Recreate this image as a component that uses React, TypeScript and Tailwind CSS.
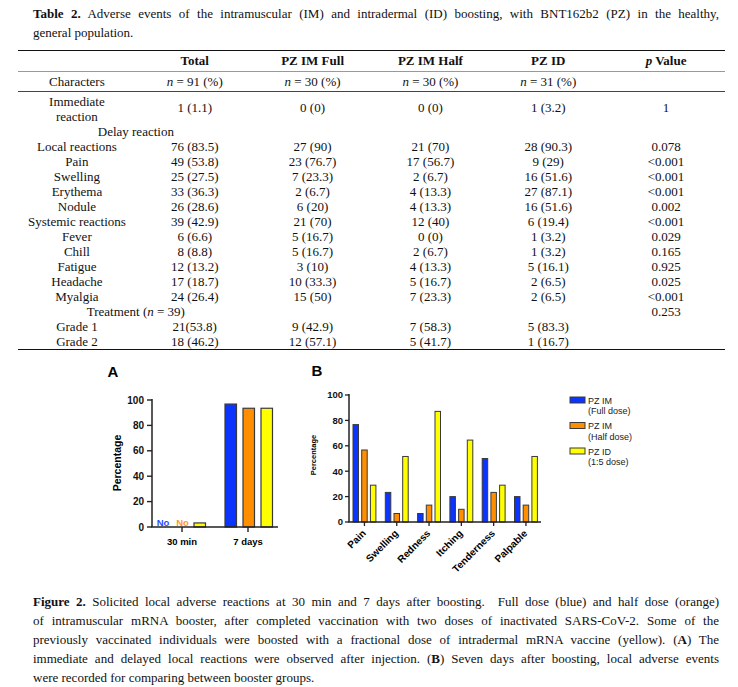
const BLUE = "#0b35ff";
const ORANGE = "#ff8f00";
const YELLOW = "#ffff00";
const EDGE = "#3a3a3a";

type Row = { label: string; cells: string[]; p: string };

const ROWS: Row[] = [
  { label: "Local reactions", cells: ["76 (83.5)", "27 (90)", "21 (70)", "28 (90.3)"], p: "0.078" },
  { label: "Pain", cells: ["49 (53.8)", "23 (76.7)", "17 (56.7)", "9 (29)"], p: "<0.001" },
  { label: "Swelling", cells: ["25 (27.5)", "7 (23.3)", "2 (6.7)", "16 (51.6)"], p: "<0.001" },
  { label: "Erythema", cells: ["33 (36.3)", "2 (6.7)", "4 (13.3)", "27 (87.1)"], p: "<0.001" },
  { label: "Nodule", cells: ["26 (28.6)", "6 (20)", "4 (13.3)", "16 (51.6)"], p: "0.002" },
  { label: "Systemic reactions", cells: ["39 (42.9)", "21 (70)", "12 (40)", "6 (19.4)"], p: "<0.001" },
  { label: "Fever", cells: ["6 (6.6)", "5 (16.7)", "0 (0)", "1 (3.2)"], p: "0.029" },
  { label: "Chill", cells: ["8 (8.8)", "5 (16.7)", "2 (6.7)", "1 (3.2)"], p: "0.165" },
  { label: "Fatigue", cells: ["12 (13.2)", "3 (10)", "4 (13.3)", "5 (16.1)"], p: "0.925" },
  { label: "Headache", cells: ["17 (18.7)", "10 (33.3)", "5 (16.7)", "2 (6.5)"], p: "0.025" },
  { label: "Myalgia", cells: ["24 (26.4)", "15 (50)", "7 (23.3)", "2 (6.5)"], p: "<0.001" },
];

const GRADES: Row[] = [
  { label: "Grade 1", cells: ["21(53.8)", "9 (42.9)", "7 (58.3)", "5 (83.3)"], p: "" },
  { label: "Grade 2", cells: ["18 (46.2)", "12 (57.1)", "5 (41.7)", "1 (16.7)"], p: "" },
];

function DataRow({ row }: { row: Row }) {
  return (
    <div className="grid h-[15px] grid-cols-6 items-center text-center">
      <span>{row.label}</span>
      {row.cells.map((c, i) => (
        <span key={i}>{c}</span>
      ))}
      <span>{row.p}</span>
    </div>
  );
}

const Y_TICKS = [0, 20, 40, 60, 80, 100];

function ChartA() {
  const base = 529;
  const k = 1.27;
  const bars = [
    { x: 194, v: 3.2, c: YELLOW },
    { x: 225, v: 96.8, c: BLUE },
    { x: 243, v: 93.5, c: ORANGE },
    { x: 261, v: 93.5, c: YELLOW },
  ];
  return (
    <svg width={220} height={242} viewBox="90 352 220 242" className="ml-[90px] shrink-0">
      <g fontFamily="'Liberation Sans', Arial, sans-serif" fontWeight="bold">
        <text x={113} y={379} fontSize={15} textAnchor="middle">A</text>
        <text x={0} y={0} fontSize={10.5} textAnchor="middle" transform="translate(121 465) rotate(-90)">
          Percentage
        </text>
        {Y_TICKS.map((t) => (
          <g key={t}>
            <line x1={147} x2={152} y1={base - t * k} y2={base - t * k} stroke="#222" strokeWidth={1.4} />
            <text x={144} y={base - t * k + 3.5} fontSize={10} textAnchor="end" fill="#111">
              {t}
            </text>
          </g>
        ))}
        {bars.map((b, i) => (
          <rect key={i} x={b.x} y={base - b.v * k} width={11.5} height={b.v * k} fill={b.c} stroke={EDGE} strokeWidth={1.2} />
        ))}
        <text x={163} y={528} fontSize={9.5} textAnchor="middle" fill="#2a4dff">No</text>
        <text x={182.5} y={528} fontSize={9.5} textAnchor="middle" fill="#ff9a1a">No</text>
        <line x1={152} x2={152} y1={401} y2={base} stroke="#222" strokeWidth={1.5} />
        <line x1={151.3} x2={278} y1={base} y2={base} stroke="#222" strokeWidth={1.5} />
        <line x1={182} x2={182} y1={base} y2={534} stroke="#222" strokeWidth={1.4} />
        <line x1={248} x2={248} y1={base} y2={534} stroke="#222" strokeWidth={1.4} />
        <text x={182} y={547} fontSize={9.5} textAnchor="middle">30 min</text>
        <text x={248} y={547} fontSize={9.5} textAnchor="middle">7 days</text>
      </g>
    </svg>
  );
}

const GROUPS = [
  { name: "Pain", v: [76.7, 56.7, 29] },
  { name: "Swelling", v: [23.3, 6.7, 51.6] },
  { name: "Redness", v: [6.7, 13.3, 87.1] },
  { name: "Itching", v: [20, 10, 64.5] },
  { name: "Tenderness", v: [50, 23.3, 29] },
  { name: "Palpable", v: [20, 13.3, 51.6] },
];

const LEGEND = [
  { c: BLUE, a: "PZ IM", b: "(Full dose)", y: 399 },
  { c: ORANGE, a: "PZ IM", b: "(Half dose)", y: 424.5 },
  { c: YELLOW, a: "PZ ID", b: "(1:5 dose)", y: 450 },
];

function ChartB() {
  const base = 524;
  const k = 1.27;
  const colors = [BLUE, ORANGE, YELLOW];
  return (
    <svg width={400} height={242} viewBox="310 352 400 242" className="shrink-0">
      <g fontFamily="'Liberation Sans', Arial, sans-serif">
        <text x={317} y={378} fontSize={15} fontWeight="bold" textAnchor="middle">B</text>
        <text x={0} y={0} fontSize={7.5} fontWeight="bold" textAnchor="middle" transform="translate(316 457) rotate(-90)">
          Percentage
        </text>
        {Y_TICKS.map((t) => (
          <g key={t}>
            <line x1={345} x2={349} y1={base - t * k} y2={base - t * k} stroke="#222" strokeWidth={1.3} />
            <text x={343} y={base - t * k + 3.4} fontSize={9.5} fontWeight="bold" textAnchor="end" fill="#111">
              {t}
            </text>
          </g>
        ))}
        {GROUPS.map((g, i) => {
          const x0 = 353 + i * 32.3;
          const cx = x0 + 11.45;
          return (
            <g key={g.name}>
              {g.v.map((v, j) => (
                <rect key={j} x={x0 + j * 8.7} y={base - v * k} width={5.5} height={v * k} fill={colors[j]} stroke={EDGE} strokeWidth={1} />
              ))}
              <line x1={cx} x2={cx} y1={base} y2={528} stroke="#222" strokeWidth={1.3} />
              <text x={0} y={0} fontSize={10} fontWeight="bold" textAnchor="end" transform={`translate(${cx + 2} 536) rotate(-45)`}>
                {g.name}
              </text>
            </g>
          );
        })}
        <line x1={349} x2={349} y1={396} y2={base} stroke="#222" strokeWidth={1.5} />
        <line x1={348.3} x2={541} y1={base} y2={base} stroke="#222" strokeWidth={1.5} />
        {LEGEND.map((l) => (
          <g key={l.b}>
            <rect x={570} y={l.y} width={15} height={6} fill={l.c} stroke={EDGE} strokeWidth={1} />
            <text x={588} y={l.y + 6.5} fontSize={9} fill="#222">{l.a}</text>
            <text x={588} y={l.y + 17} fontSize={9} fill="#222">{l.b}</text>
          </g>
        ))}
      </g>
    </svg>
  );
}

const JUSTIFY = "block whitespace-nowrap [text-align-last:justify] text-justify";

export default function App() {
  return (
    <div className="h-[687px] w-[738px] overflow-hidden bg-white font-['Liberation_Serif',serif] text-[13px] text-[#111]">
      <div className="ml-[33px] w-[686px] pt-[4px] leading-[19px]">
        <span className={JUSTIFY}>
          <b>Table 2.</b> Adverse events of the intramuscular (IM) and intradermal (ID) boosting, with BNT162b2 (PZ) in the healthy,
        </span>
        <span className="block">general population.</span>
      </div>

      <div className="ml-[18px] mt-[8px] w-[707px] border-t-[1.5px] border-[#111] leading-[15px]">
        <div className="grid h-[20.5px] grid-cols-6 items-center border-b-[1.5px] border-[#999] text-center font-bold">
          <span />
          <span>Total</span>
          <span>PZ IM Full</span>
          <span>PZ IM Half</span>
          <span>PZ ID</span>
          <span>
            <i>p</i> Value
          </span>
        </div>
        <div className="grid h-[20px] grid-cols-6 items-center border-b border-[#444] text-center">
          <span>Characters</span>
          <span><i>n</i> = 91 (%)</span>
          <span><i>n</i> = 30 (%)</span>
          <span><i>n</i> = 30 (%)</span>
          <span><i>n</i> = 31 (%)</span>
          <span />
        </div>
        <div className="grid h-[32px] grid-cols-6 items-center text-center">
          <span className="pt-[2px]">
            Immediate
            <br />
            reaction
          </span>
          <span>1 (1.1)</span>
          <span>0 (0)</span>
          <span>0 (0)</span>
          <span>1 (3.2)</span>
          <span>1</span>
        </div>
        <div className="grid h-[15px] grid-cols-6 items-center text-center">
          <span className="col-span-2">Delay reaction</span>
        </div>
        {ROWS.map((r) => (
          <DataRow key={r.label} row={r} />
        ))}
        <div className="grid h-[15px] grid-cols-6 items-center text-center">
          <span className="col-span-2">
            Treatment (<i>n</i> = 39)
          </span>
          <span />
          <span />
          <span />
          <span>0.253</span>
        </div>
        {GRADES.map((r) => (
          <DataRow key={r.label} row={r} />
        ))}
        <div className="border-t-[1.5px] border-[#111]" />
      </div>

      <div className="flex h-[242px]">
        <ChartA />
        <ChartB />
      </div>

      <div className="ml-[33px] w-[686px] leading-[19px]">
        <span className={JUSTIFY}>
          <b>Figure 2.</b> Solicited local adverse reactions at 30 min and 7 days after boosting.&nbsp; Full dose (blue) and half dose (orange)
        </span>
        <span className={JUSTIFY}>
          of intramuscular mRNA booster, after completed vaccination with two doses of inactivated SARS-CoV-2. Some of the
        </span>
        <span className={JUSTIFY}>
          previously vaccinated individuals were boosted with a fractional dose of intradermal mRNA vaccine (yellow). (<b>A</b>) The
        </span>
        <span className={JUSTIFY}>
          immediate and delayed local reactions were observed after injection. (<b>B</b>) Seven days after boosting, local adverse events
        </span>
        <span className="block">were recorded for comparing between booster groups.</span>
      </div>
    </div>
  );
}
